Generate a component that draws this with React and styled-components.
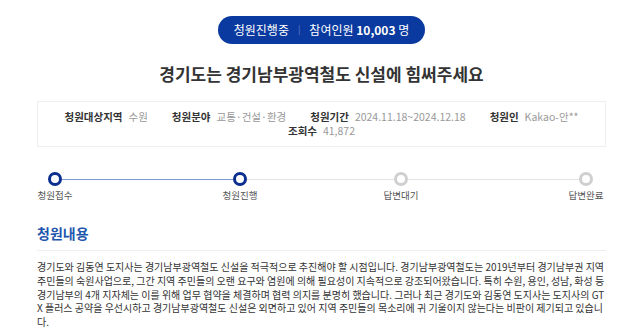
import React from 'react';
import styled, { createGlobalStyle } from 'styled-components';

const GlobalStyle = createGlobalStyle`
  body {
    margin: 0;
    background: #fff;
    font-family: 'Noto Sans CJK KR', 'Noto Sans', sans-serif;
    color: #333;
  }
`;

const info = [
  { label: '청원대상지역', value: '수원' },
  { label: '청원분야', value: '교통·건설·환경' },
  { label: '청원기간', value: '2024.11.18~2024.12.18' },
  { label: '청원인', value: 'Kakao-안**' },
  { label: '조회수', value: '41,872' },
];

const steps = [
  { name: '청원접수', done: true },
  { name: '청원진행', done: true, line: 171 },
  { name: '답변대기', done: false, line: 147 },
  { name: '답변완료', done: false, line: 171 },
];

export default function App() {
  return (
    <Page>
      <GlobalStyle />
      <Header>
        <StatusPill>
          <span>청원진행중</span>
          <PillDivider>|</PillDivider>
          <span>
            참여인원 <strong>10,003</strong> 명
          </span>
        </StatusPill>
        <Title>경기도는 경기남부광역철도 신설에 힘써주세요</Title>
      </Header>

      <InfoBox>
        {info.map((item) => (
          <InfoItem key={item.label}>
            <InfoLabel>{item.label}</InfoLabel>
            <InfoValue>{item.value}</InfoValue>
          </InfoItem>
        ))}
      </InfoBox>

      <Progress>
        {steps.map((step) => (
          <React.Fragment key={step.name}>
            {step.line && <Connector $width={step.line} $done={step.done} />}
            <Step>
              <Dot $done={step.done} />
              <StepName>{step.name}</StepName>
            </Step>
          </React.Fragment>
        ))}
      </Progress>

      <SectionTitle>청원내용</SectionTitle>
      <Body>
        경기도와 김동연 도지사는 경기남부광역철도 신설을 적극적으로 추진해야 할 시점입니다. 경기남부광역철도는 2019년부터 경기남부권 지역
        <br />
        주민들의 숙원사업으로, 그간 지역 주민들의 오랜 요구와 염원에 의해 필요성이 지속적으로 강조되어왔습니다. 특히 수원, 용인, 성남, 화성 등
        경기남부의 4개 지자체는 이를 위해 업무 협약을 체결하며 협력 의지를 분명히 했습니다. 그러나 최근 경기도와 김동연 도지사는 도지사의 GTX
        플러스 공약을 우선시하고 경기남부광역철도 신설은 외면하고 있어 지역 주민들의 목소리에 귀 기울이지 않는다는 비판이 제기되고 있습니다.
      </Body>
    </Page>
  );
}

const Page = styled.div`
  padding: 16px 34px 0 37px;
`;

const Header = styled.header`
  display: flex;
  flex-direction: column;
  align-items: center;
`;

const StatusPill = styled.div`
  display: flex;
  align-items: center;
  height: 28px;
  padding: 0 16px;
  border-radius: 14px;
  background: #0a3a9f;
  color: #fff;
  font-size: 12px;
  line-height: 28px;
  white-space: nowrap;

  strong {
    font-weight: 700;
  }
`;

const PillDivider = styled.span`
  margin: 0 9px;
  color: #6f86c8;
  font-size: 9px;
`;

const Title = styled.h1`
  margin: 20px 0 0;
  font-size: 17px;
  line-height: 20px;
  font-weight: 700;
  color: #333;
`;

const InfoBox = styled.div`
  display: flex;
  flex-wrap: wrap;
  justify-content: center;
  column-gap: 24px;
  margin-top: 17px;
  padding: 8px 0;
  border: 1px solid #eeeeee;
  font-size: 10.5px;
  line-height: 14px;
`;

const InfoItem = styled.div`
  display: flex;
  gap: 6px;
  white-space: nowrap;
`;

const InfoLabel = styled.span`
  font-weight: 700;
  color: #333;
`;

const InfoValue = styled.span`
  color: #999;
`;

const Progress = styled.div`
  display: flex;
  align-items: flex-start;
  margin-top: 25px;
`;

const Step = styled.div`
  display: flex;
  flex-direction: column;
  align-items: center;
  width: 36px;
  position: relative;
  z-index: 1;
`;

const Dot = styled.span`
  box-sizing: border-box;
  width: 14px;
  height: 14px;
  border-radius: 50%;
  background: #fff;
  border: 3.5px solid ${(p) => (p.$done ? '#0a2f8f' : '#cfcfcf')};
`;

const StepName = styled.span`
  margin-top: 2px;
  font-size: 9.5px;
  line-height: 14px;
  color: #555;
  white-space: nowrap;
`;

const Connector = styled.span`
  flex: none;
  width: ${(p) => p.$width}px;
  height: 1px;
  margin: 6.5px -11px 0;
  background: ${(p) => (p.$done ? '#7f98d6' : '#e3e3e3')};
`;

const SectionTitle = styled.h2`
  margin: 22px 0 0;
  padding-bottom: 7px;
  border-bottom: 1px solid #eeeeee;
  font-size: 14px;
  line-height: 19px;
  font-weight: 700;
  color: #1f56ad;
`;

const Body = styled.p`
  margin: 9px 0 0;
  font-size: 10px;
  line-height: 13.8px;
  color: #333;
  word-break: break-all;
`;
